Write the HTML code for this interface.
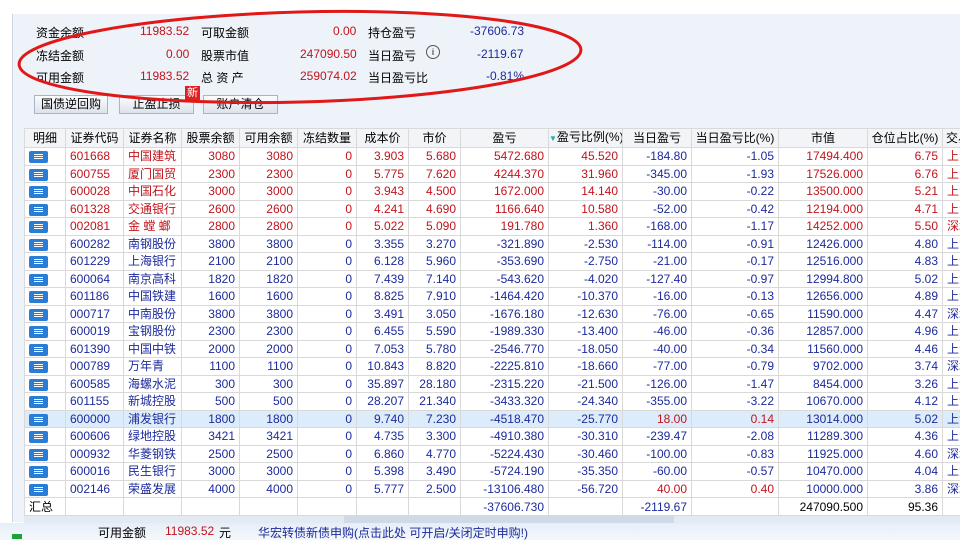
<!DOCTYPE html><html><head><meta charset="utf-8"><style>
body{margin:0;width:960px;height:540px;overflow:hidden;background:#fff;font-family:"Liberation Sans","Noto Sans CJK SC",sans-serif;font-size:12px;position:relative}
.panel{position:absolute;left:12px;top:14px;width:948px;height:508px;background:#eef3f9;border-left:1px solid #c8d4e2}
.t{position:absolute;white-space:nowrap}
.r{color:#c0141c}.b{color:#1c2a9c}
.btn{position:absolute;top:95px;height:17px;line-height:17px;border:1px solid #aab4c2;background:linear-gradient(#fbfcfd,#dde3ea);text-align:center;font-size:12px}
table{position:absolute;left:24px;top:128px;width:936px;border-collapse:collapse;table-layout:fixed;background:#fff}
td,th{border:1px solid #d9d9d9;height:16.5px;line-height:16px;padding:0 4px;white-space:nowrap;overflow:hidden;text-align:right;font-weight:normal;font-size:12px}
th{background:#f2f4f7;text-align:center;height:17px;padding:0}
td.c{text-align:left}
tr.hl td{background:#dcecfa}
.ic{display:inline-block;width:19px;height:12px;background:#2a7dd4;border-radius:2px;vertical-align:middle;position:relative}
.ic:after{content:"";position:absolute;left:5px;top:3px;width:9px;height:1px;background:#fff;box-shadow:0 2px #fff,0 4px #fff}
</style></head><body>
<div class="panel"></div>
<div class="t" style="left:36px;top:24px">资金余额</div><div class="t r" style="left:140px;top:24px">11983.52</div>
<div class="t" style="left:201px;top:24px">可取金额</div><div class="t r" style="left:333px;top:24px">0.00</div>
<div class="t" style="left:368px;top:24px">持仓盈亏</div><div class="t b" style="left:470px;top:24px">-37606.73</div>
<div class="t" style="left:36px;top:47px">冻结金额</div><div class="t r" style="left:166px;top:47px">0.00</div>
<div class="t" style="left:201px;top:47px">股票市值</div><div class="t r" style="left:300px;top:47px">247090.50</div>
<div class="t" style="left:368px;top:47px">当日盈亏</div><div class="t" style="left:426px;top:45px;width:12px;height:12px;border:1px solid #555;border-radius:50%;font-size:9px;text-align:center;line-height:12px">i</div><div class="t b" style="left:477px;top:47px">-2119.67</div>
<div class="t" style="left:36px;top:69px">可用金额</div><div class="t r" style="left:140px;top:69px">11983.52</div>
<div class="t" style="left:201px;top:69px">总 资 产</div><div class="t r" style="left:300px;top:69px">259074.02</div>
<div class="t" style="left:368px;top:69px">当日盈亏比</div><div class="t b" style="left:486px;top:69px">-0.81%</div>
<div class="btn" style="left:34px;width:72px">国债逆回购</div>
<div class="btn" style="left:119px;width:73px">止盈止损</div>
<div class="btn" style="left:203px;width:73px">账户清仓</div>
<div class="t" style="left:185px;top:86px;width:15px;height:14px;background:#e02020;color:#fff;font-size:11px;text-align:center;line-height:14px">新</div>
<svg style="position:absolute;left:0;top:0" width="960" height="140"><ellipse cx="300" cy="57" rx="281" ry="45" transform="rotate(-1.5 300 57)" fill="none" stroke="#e01818" stroke-width="3"/></svg>
<table>
<colgroup><col style="width:41px"><col style="width:58px"><col style="width:58px"><col style="width:58px"><col style="width:58px"><col style="width:59px"><col style="width:52px"><col style="width:52px"><col style="width:88px"><col style="width:74px"><col style="width:69px"><col style="width:87px"><col style="width:89px"><col style="width:75px"><col style="width:18px"></colgroup>
<tr><th>明细</th><th>证券代码</th><th>证券名称</th><th>股票余额</th><th>可用余额</th><th>冻结数量</th><th>成本价</th><th>市价</th><th>盈亏</th><th><span style="color:#2aa;font-size:8px">▼</span>盈亏比例(%)</th><th>当日盈亏</th><th>当日盈亏比(%)</th><th>市值</th><th>仓位占比(%)</th><th style="text-align:left;padding-left:3px">交易</th></tr>
<tr class="r"><td class="c"><span class="ic"></span></td><td class="c">601668</td><td class="c">中国建筑</td><td>3080</td><td>3080</td><td>0</td><td>3.903</td><td>5.680</td><td>5472.680</td><td>45.520</td><td class="b">-184.80</td><td class="b">-1.05</td><td>17494.400</td><td>6.75</td><td class="c">上海</td></tr>
<tr class="r"><td class="c"><span class="ic"></span></td><td class="c">600755</td><td class="c">厦门国贸</td><td>2300</td><td>2300</td><td>0</td><td>5.775</td><td>7.620</td><td>4244.370</td><td>31.960</td><td class="b">-345.00</td><td class="b">-1.93</td><td>17526.000</td><td>6.76</td><td class="c">上海</td></tr>
<tr class="r"><td class="c"><span class="ic"></span></td><td class="c">600028</td><td class="c">中国石化</td><td>3000</td><td>3000</td><td>0</td><td>3.943</td><td>4.500</td><td>1672.000</td><td>14.140</td><td class="b">-30.00</td><td class="b">-0.22</td><td>13500.000</td><td>5.21</td><td class="c">上海</td></tr>
<tr class="r"><td class="c"><span class="ic"></span></td><td class="c">601328</td><td class="c">交通银行</td><td>2600</td><td>2600</td><td>0</td><td>4.241</td><td>4.690</td><td>1166.640</td><td>10.580</td><td class="b">-52.00</td><td class="b">-0.42</td><td>12194.000</td><td>4.71</td><td class="c">上海</td></tr>
<tr class="r"><td class="c"><span class="ic"></span></td><td class="c">002081</td><td class="c">金 螳 螂</td><td>2800</td><td>2800</td><td>0</td><td>5.022</td><td>5.090</td><td>191.780</td><td>1.360</td><td class="b">-168.00</td><td class="b">-1.17</td><td>14252.000</td><td>5.50</td><td class="c">深圳</td></tr>
<tr class="b"><td class="c"><span class="ic"></span></td><td class="c">600282</td><td class="c">南钢股份</td><td>3800</td><td>3800</td><td>0</td><td>3.355</td><td>3.270</td><td>-321.890</td><td>-2.530</td><td>-114.00</td><td>-0.91</td><td>12426.000</td><td>4.80</td><td class="c">上海</td></tr>
<tr class="b"><td class="c"><span class="ic"></span></td><td class="c">601229</td><td class="c">上海银行</td><td>2100</td><td>2100</td><td>0</td><td>6.128</td><td>5.960</td><td>-353.690</td><td>-2.750</td><td>-21.00</td><td>-0.17</td><td>12516.000</td><td>4.83</td><td class="c">上海</td></tr>
<tr class="b"><td class="c"><span class="ic"></span></td><td class="c">600064</td><td class="c">南京高科</td><td>1820</td><td>1820</td><td>0</td><td>7.439</td><td>7.140</td><td>-543.620</td><td>-4.020</td><td>-127.40</td><td>-0.97</td><td>12994.800</td><td>5.02</td><td class="c">上海</td></tr>
<tr class="b"><td class="c"><span class="ic"></span></td><td class="c">601186</td><td class="c">中国铁建</td><td>1600</td><td>1600</td><td>0</td><td>8.825</td><td>7.910</td><td>-1464.420</td><td>-10.370</td><td>-16.00</td><td>-0.13</td><td>12656.000</td><td>4.89</td><td class="c">上海</td></tr>
<tr class="b"><td class="c"><span class="ic"></span></td><td class="c">000717</td><td class="c">中南股份</td><td>3800</td><td>3800</td><td>0</td><td>3.491</td><td>3.050</td><td>-1676.180</td><td>-12.630</td><td>-76.00</td><td>-0.65</td><td>11590.000</td><td>4.47</td><td class="c">深圳</td></tr>
<tr class="b"><td class="c"><span class="ic"></span></td><td class="c">600019</td><td class="c">宝钢股份</td><td>2300</td><td>2300</td><td>0</td><td>6.455</td><td>5.590</td><td>-1989.330</td><td>-13.400</td><td>-46.00</td><td>-0.36</td><td>12857.000</td><td>4.96</td><td class="c">上海</td></tr>
<tr class="b"><td class="c"><span class="ic"></span></td><td class="c">601390</td><td class="c">中国中铁</td><td>2000</td><td>2000</td><td>0</td><td>7.053</td><td>5.780</td><td>-2546.770</td><td>-18.050</td><td>-40.00</td><td>-0.34</td><td>11560.000</td><td>4.46</td><td class="c">上海</td></tr>
<tr class="b"><td class="c"><span class="ic"></span></td><td class="c">000789</td><td class="c">万年青</td><td>1100</td><td>1100</td><td>0</td><td>10.843</td><td>8.820</td><td>-2225.810</td><td>-18.660</td><td>-77.00</td><td>-0.79</td><td>9702.000</td><td>3.74</td><td class="c">深圳</td></tr>
<tr class="b"><td class="c"><span class="ic"></span></td><td class="c">600585</td><td class="c">海螺水泥</td><td>300</td><td>300</td><td>0</td><td>35.897</td><td>28.180</td><td>-2315.220</td><td>-21.500</td><td>-126.00</td><td>-1.47</td><td>8454.000</td><td>3.26</td><td class="c">上海</td></tr>
<tr class="b"><td class="c"><span class="ic"></span></td><td class="c">601155</td><td class="c">新城控股</td><td>500</td><td>500</td><td>0</td><td>28.207</td><td>21.340</td><td>-3433.320</td><td>-24.340</td><td>-355.00</td><td>-3.22</td><td>10670.000</td><td>4.12</td><td class="c">上海</td></tr>
<tr class="b hl"><td class="c"><span class="ic"></span></td><td class="c">600000</td><td class="c">浦发银行</td><td>1800</td><td>1800</td><td>0</td><td>9.740</td><td>7.230</td><td>-4518.470</td><td>-25.770</td><td class="r">18.00</td><td class="r">0.14</td><td>13014.000</td><td>5.02</td><td class="c">上海</td></tr>
<tr class="b"><td class="c"><span class="ic"></span></td><td class="c">600606</td><td class="c">绿地控股</td><td>3421</td><td>3421</td><td>0</td><td>4.735</td><td>3.300</td><td>-4910.380</td><td>-30.310</td><td>-239.47</td><td>-2.08</td><td>11289.300</td><td>4.36</td><td class="c">上海</td></tr>
<tr class="b"><td class="c"><span class="ic"></span></td><td class="c">000932</td><td class="c">华菱钢铁</td><td>2500</td><td>2500</td><td>0</td><td>6.860</td><td>4.770</td><td>-5224.430</td><td>-30.460</td><td>-100.00</td><td>-0.83</td><td>11925.000</td><td>4.60</td><td class="c">深圳</td></tr>
<tr class="b"><td class="c"><span class="ic"></span></td><td class="c">600016</td><td class="c">民生银行</td><td>3000</td><td>3000</td><td>0</td><td>5.398</td><td>3.490</td><td>-5724.190</td><td>-35.350</td><td>-60.00</td><td>-0.57</td><td>10470.000</td><td>4.04</td><td class="c">上海</td></tr>
<tr class="b"><td class="c"><span class="ic"></span></td><td class="c">002146</td><td class="c">荣盛发展</td><td>4000</td><td>4000</td><td>0</td><td>5.777</td><td>2.500</td><td>-13106.480</td><td>-56.720</td><td class="r">40.00</td><td class="r">0.40</td><td>10000.000</td><td>3.86</td><td class="c">深圳</td></tr>
<tr><td class="c" style="height:17px">汇总</td><td></td><td></td><td></td><td></td><td></td><td></td><td></td><td class="b">-37606.730</td><td></td><td class="b">-2119.67</td><td></td><td>247090.500</td><td>95.36</td><td></td></tr>
</table>
<div style="position:absolute;left:24px;top:516px;width:936px;height:7px;background:#e4eaf2"><div style="position:absolute;left:320px;width:330px;height:7px;background:#d0dae6"></div></div>
<div style="position:absolute;left:0;top:523px;width:960px;height:17px;background:linear-gradient(#e6eef8,#f4f8fc)"></div>
<div class="t" style="left:12px;top:534px;width:10px;height:5px;background:#1ea03a"></div>
<div class="t" style="left:98px;top:524px">可用金额</div><div class="t r" style="left:165px;top:524px">11983.52</div><div class="t" style="left:219px;top:524px">元</div>
<div class="t b" style="left:258px;top:524px">华宏转债新债申购(点击此处 可开启/关闭定时申购!)</div>
</body></html>
